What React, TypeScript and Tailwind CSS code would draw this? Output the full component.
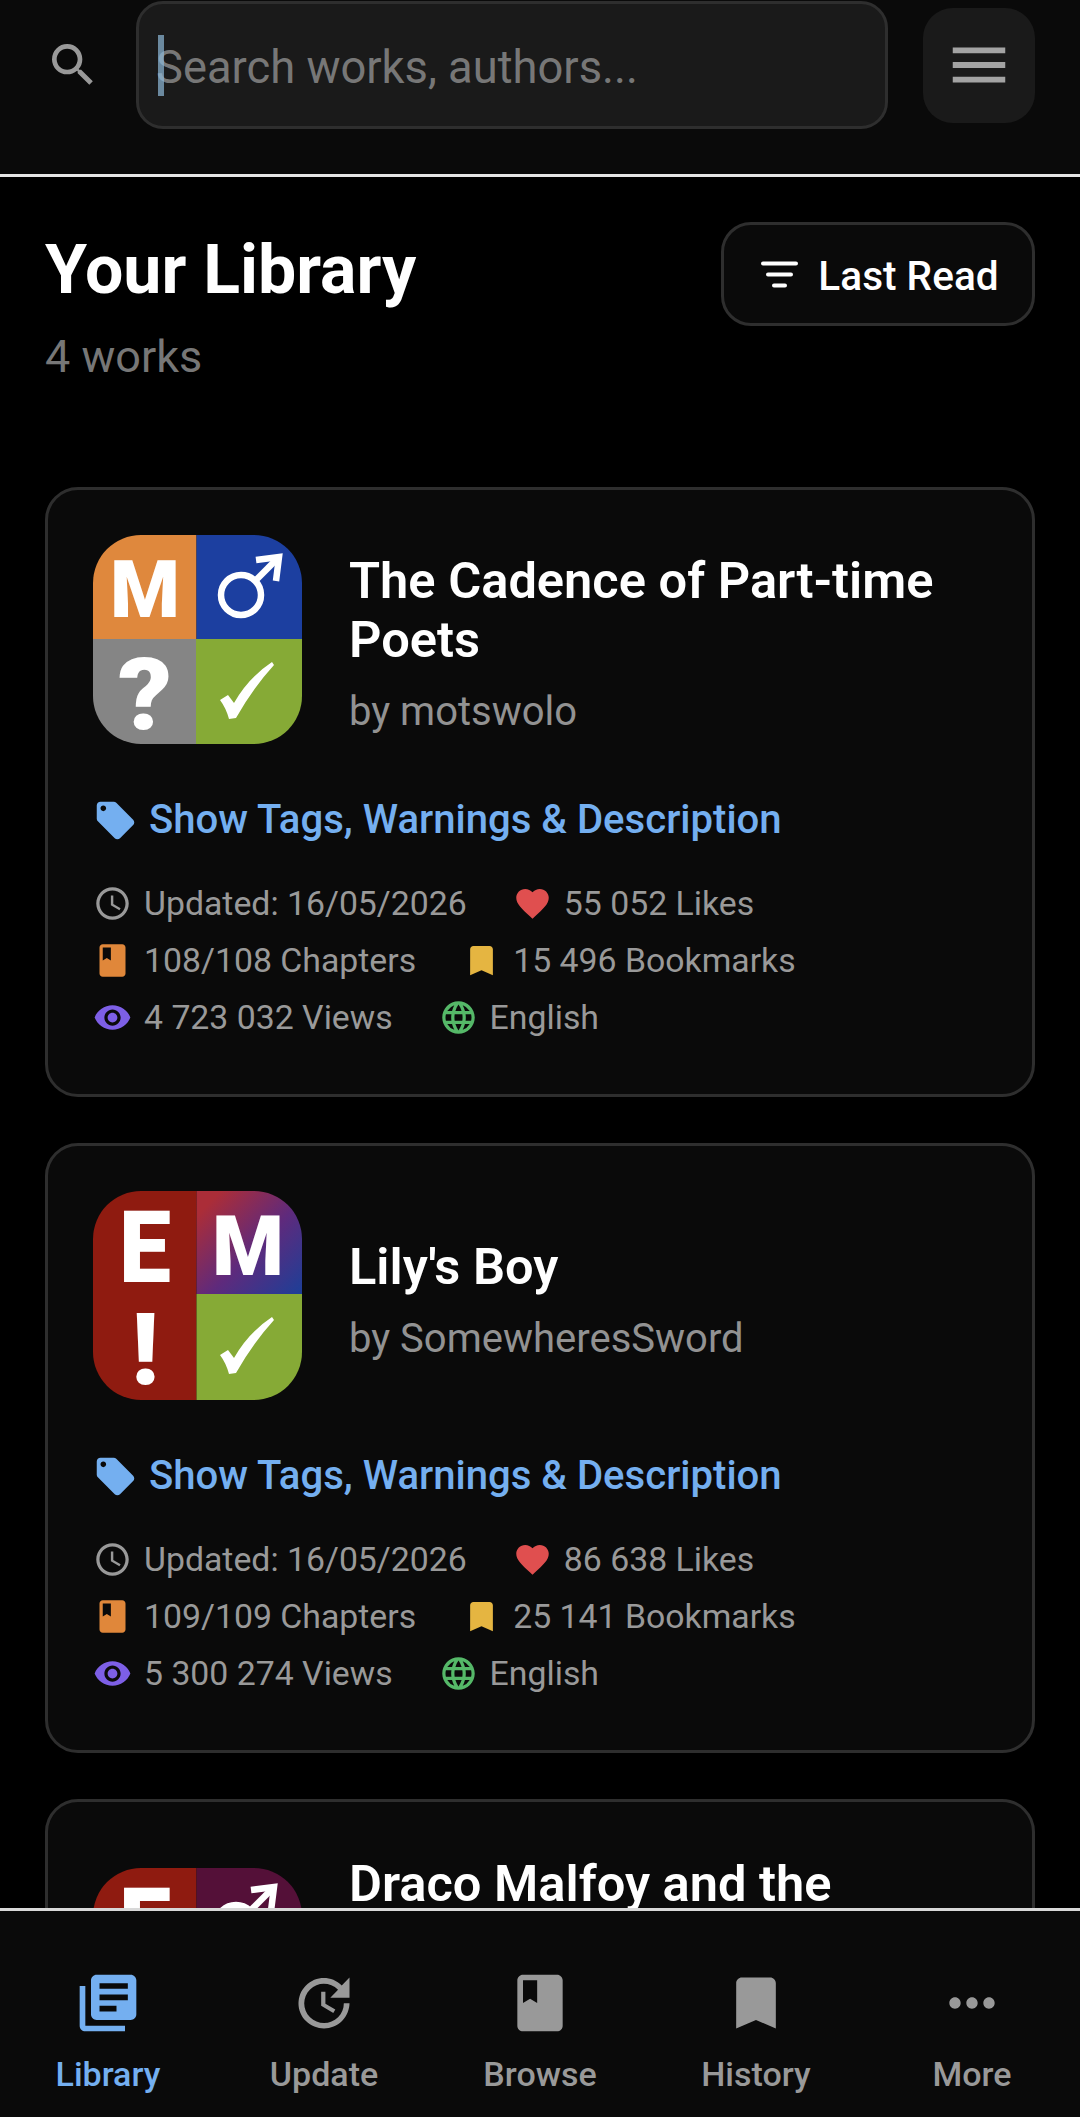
import React from "react";
import {
  MdSearch, MdMenu, MdLocalOffer, MdAccessTime, MdFavorite, MdBook, MdBookmark,
  MdVisibility, MdLanguage, MdLibraryBooks, MdUpdate, MdMoreHoriz,
} from "react-icons/md";

const font = "[font-family:Roboto,'Liberation_Sans',sans-serif]";

function Male({ dx = 0, dy = 0 }: { dx?: number; dy?: number }) {
  return (
    <g transform={`translate(${dx} ${dy})`} fill="none" stroke="#fff" strokeWidth="6.5">
      <circle cx="148" cy="60" r="20" />
      <path d="M163 45 L184 24" />
      <path d="M163 25 L186 22 L183 46" strokeLinejoin="miter" />
    </g>
  );
}

function Check({ dy = 0 }: { dy?: number }) {
  return (
    <path
      transform={`translate(0 ${dy})`}
      fill="#fff"
      d="M127 165 L135 160 L141 168 Q155 143 179 127 L181 130 Q160 153 143 183 L136 184 Q133 173 127 165Z"
    />
  );
}

const Letter = ({ x, y, size, w, children }: { x: number; y: number; size: number; w?: number; children: string }) => (
  <text
    x={x}
    y={y}
    fontSize={size}
    fontFamily="Roboto"
    fontWeight={900}
    fill="#fff"
    textAnchor="middle"
    textLength={w}
    lengthAdjust={w ? "spacingAndGlyphs" : undefined}
  >
    {children}
  </text>
);

function Cover({ kind }: { kind: number }) {
  return (
    <svg viewBox="0 0 209 209" className="w-[209px] h-[209px] rounded-[48px] shrink-0">
      <defs>
        <linearGradient id="grad2" x1="103" y1="0" x2="209" y2="104" gradientUnits="userSpaceOnUse">
          <stop offset="0.12" stopColor="#ab2d38" />
          <stop offset="0.55" stopColor="#5f2a7c" />
          <stop offset="1" stopColor="#1c3f98" />
        </linearGradient>
      </defs>
      {kind === 1 && (
        <>
          <rect width="103.5" height="104" fill="#df883d" />
          <rect x="103.5" width="105.5" height="104" fill="#1c3fa0" />
          <rect y="104" width="103" height="105" fill="#858585" />
          <rect x="103" y="104" width="106" height="105" fill="#86aa36" />
          <Letter x={52} y={82} size={80} w={70}>M</Letter>
          <Male />
          <Letter x={52} y={194} size={100} w={54}>?</Letter>
          <Check />
        </>
      )}
      {kind === 2 && (
        <>
          <rect width="103.5" height="209" fill="#8f1b10" />
          <rect x="103.5" width="105.5" height="103" fill="url(#grad2)" />
          <rect x="103.5" y="103" width="105.5" height="106" fill="#86aa36" />
          <Letter x={52} y={91} size={100} w={52}>E</Letter>
          <Letter x={155} y={84} size={83} w={72}>M</Letter>
          <Letter x={52} y={193} size={100}>!</Letter>
          <Check dy={-1} />
        </>
      )}
      {kind === 3 && (
        <>
          <rect width="103.5" height="209" fill="#8f1b10" />
          <rect x="103.5" width="105.5" height="103" fill="#541038" />
          <rect x="103.5" y="103" width="105.5" height="106" fill="#86aa36" />
          <Letter x={52} y={91} size={100} w={52}>E</Letter>
          <Male dx={-5} dy={-3} />
          <Check dy={-1} />
        </>
      )}
    </svg>
  );
}

function Stat({ icon, text }: { icon: React.ReactNode; text: string }) {
  return (
    <div className="flex items-center gap-3">
      {icon}
      <span>{text}</span>
    </div>
  );
}

type Work = {
  kind: number; title: string; author: string; likes: string; chapters: string;
  bookmarks: string; views: string;
};

const works: Work[] = [
  { kind: 1, title: "The Cadence of Part-time Poets", author: "motswolo", likes: "55 052", chapters: "108/108", bookmarks: "15 496", views: "4 723 032" },
  { kind: 2, title: "Lily's Boy", author: "SomewheresSword", likes: "86 638", chapters: "109/109", bookmarks: "25 141", views: "5 300 274" },
  { kind: 3, title: "Draco Malfoy and the Mortifying Ordeal of Being in Love", author: "isthisselfcare", likes: "90 112", chapters: "40/40", bookmarks: "30 204", views: "6 120 518" },
];

function Card({ w }: { w: Work }) {
  return (
    <div className="shrink-0 rounded-[33px] border-[3px] border-[#2e2e2e] bg-[#0a0a0a] px-[45px] pt-[45px] pb-[48px]">
      <div className="flex items-center gap-[47px]">
        <Cover kind={w.kind} />
        <div className="flex flex-col min-w-0 pt-[7px] pb-[5px]">
          <div className="text-[50.6px] leading-[59px] font-semibold text-white">{w.title}</div>
          <div className="mt-[25px] text-[40px] leading-[36px] text-[#929292]">by {w.author}</div>
        </div>
      </div>
      <div className="mt-[52px] flex items-center gap-[11px] h-[48px]">
        <MdLocalOffer className="w-[45px] h-[45px] text-[#74aff0]" />
        <span className="text-[40.1px] font-medium text-[#74aff0]">Show Tags, Warnings &amp; Description</span>
      </div>
      <div className="mt-[31px] text-[33.8px] leading-[57px] text-[#999999]">
        <div className="flex gap-[46px]">
          <Stat icon={<MdAccessTime className="w-[39px] h-[39px] text-[#999999]" />} text="Updated: 16/05/2026" />
          <Stat icon={<MdFavorite className="w-[39px] h-[39px] text-[#e04f4f]" />} text={`${w.likes} Likes`} />
        </div>
        <div className="flex gap-[46px]">
          <Stat icon={<MdBook className="w-[39px] h-[39px] text-[#e0873a]" />} text={`${w.chapters} Chapters`} />
          <Stat icon={<MdBookmark className="w-[39px] h-[39px] text-[#e5b541]" />} text={`${w.bookmarks} Bookmarks`} />
        </div>
        <div className="flex gap-[46px]">
          <Stat icon={<MdVisibility className="w-[39px] h-[39px] text-[#7d5fe6]" />} text={`${w.views} Views`} />
          <Stat icon={<MdLanguage className="w-[39px] h-[39px] text-[#55b868]" />} text="English" />
        </div>
      </div>
    </div>
  );
}

function NavItem({ icon, label, active }: { icon: React.ReactNode; label: string; active?: boolean }) {
  return (
    <div className={`flex flex-col items-center ${active ? "text-[#74aff0]" : "text-[#999999]"}`}>
      {icon}
      <span className="mt-[16px] text-[34px] leading-[42px] font-medium">{label}</span>
    </div>
  );
}

export default function App() {
  return (
    <div className={`${font} flex h-[2117px] w-[1080px] flex-col overflow-hidden bg-black`}>
      <header className="shrink-0 bg-[#0a0a0a] border-b-[3px] border-[#e5e5e5] h-[177px] pl-[45px] pr-[45px] pt-px">
        <div className="flex items-center h-[128px]">
          <MdSearch className="w-[56px] h-[56px] text-[#999999] shrink-0" />
          <div className="relative ml-[35px] flex h-[128px] w-[752px] items-center rounded-[27px] border-[3px] border-[#2e2e2e] bg-[#1a1a1a] pl-[17px] pt-[5px]">
            <span className="absolute left-[19px] top-[31px] h-[61px] w-[6px] bg-[#8fb9d8]/70" />
            <span className="text-[45.3px] text-[#777777]">Search works, authors...</span>
          </div>
          <button className="ml-[35px] flex h-[115px] w-[112px] items-center justify-center rounded-[30px] bg-[#1a1a1a]">
            <MdMenu className="w-[70px] h-[70px] text-[#a3a3a3]" />
          </button>
        </div>
      </header>

      <main className="flex-1 min-h-0 overflow-hidden px-[45px] pt-[45px]">
        <div className="flex items-start justify-between">
          <div className="pt-[9px]">
            <h1 className="text-[68px] leading-[79px] font-bold text-white">Your Library</h1>
            <div className="mt-[20px] text-[45px] leading-[54px] text-[#777777]">4 works</div>
          </div>
          <button className="flex h-[104px] w-[314px] items-center justify-center gap-[20px] rounded-[30px] border-[3px] border-[#2e2e2e] bg-[#0a0a0a] pl-[4px]">
            <svg width="37" height="27" viewBox="0 0 37 27" className="shrink-0" stroke="#fff" strokeWidth="4" strokeLinecap="round">
              <path d="M2 2.5 H35 M7 13.5 H30 M13 24.5 H24" />
            </svg>
            <span className="pt-[4px] text-[40.6px] leading-[48px] font-medium text-white">Last Read</span>
          </button>
        </div>
        <div className="mt-[103px] flex flex-col gap-[46px]">
          {works.map((w) => <Card key={w.kind} w={w} />)}
        </div>
      </main>

      <nav className="shrink-0 h-[209px] border-t-[3px] border-[#d8d8d8] bg-[#0a0a0a] pt-[58px] grid grid-cols-5">
        <NavItem active label="Library" icon={<MdLibraryBooks className="w-[68px] h-[68px]" />} />
        <NavItem label="Update" icon={<MdUpdate className="w-[68px] h-[68px]" />} />
        <NavItem label="Browse" icon={<MdBook className="w-[68px] h-[68px]" />} />
        <NavItem label="History" icon={<MdBookmark className="w-[68px] h-[68px]" />} />
        <NavItem label="More" icon={<MdMoreHoriz className="w-[68px] h-[68px]" />} />
      </nav>
    </div>
  );
}
